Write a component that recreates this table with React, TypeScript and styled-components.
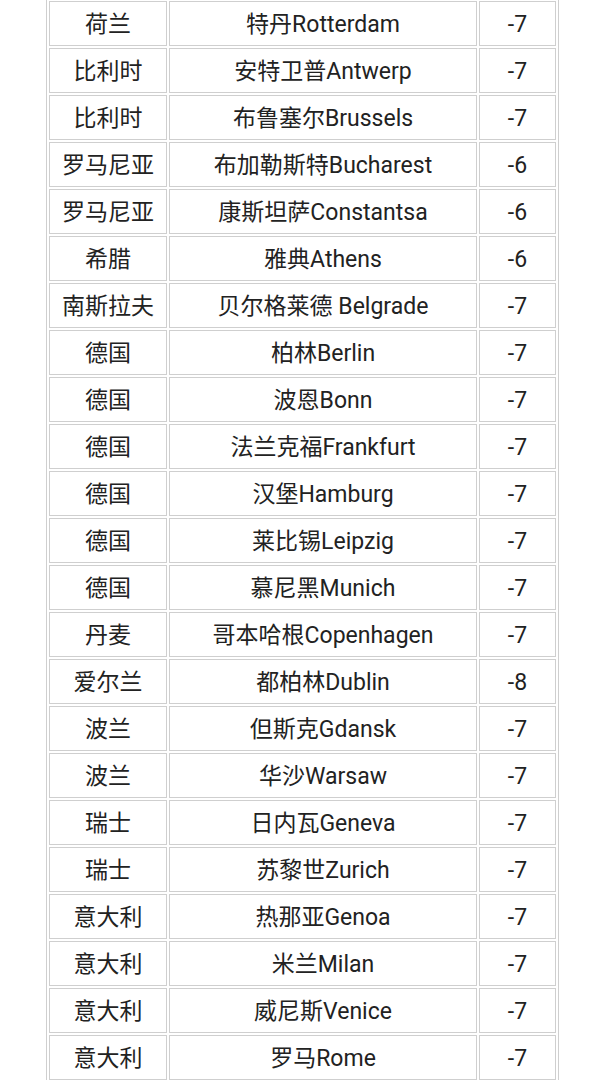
import React from "react";
import styled, { createGlobalStyle } from "styled-components";

const GlobalStyle = createGlobalStyle`
  html, body {
    margin: 0;
    padding: 0;
    background: #ffffff;
  }
  body {
    font-family: Roboto, "Noto Sans CJK SC", sans-serif;
    color: #222222;
    overflow: hidden;
  }
  *, *::before, *::after { box-sizing: border-box; }
`;

const Table = styled.div`
  display: grid;
  grid-template-columns: 118px 308px 77px;
  gap: 2px;
  padding: 2px;
  width: 513px;
  margin: -2px 0 0 46px;
  border: 1px solid #cfcfcf;
`;

const Cell = styled.div`
  height: 45px;
  padding-top: 2px;
  border: 1px solid #cfcfcf;
  display: flex;
  align-items: center;
  justify-content: center;
  font-size: 23px;
  line-height: 1;
  white-space: nowrap;
`;

const rows: [string, string, string][] = [
  ["荷兰", "特丹Rotterdam", "-7"],
  ["比利时", "安特卫普Antwerp", "-7"],
  ["比利时", "布鲁塞尔Brussels", "-7"],
  ["罗马尼亚", "布加勒斯特Bucharest", "-6"],
  ["罗马尼亚", "康斯坦萨Constantsa", "-6"],
  ["希腊", "雅典Athens", "-6"],
  ["南斯拉夫", "贝尔格莱德 Belgrade", "-7"],
  ["德国", "柏林Berlin", "-7"],
  ["德国", "波恩Bonn", "-7"],
  ["德国", "法兰克福Frankfurt", "-7"],
  ["德国", "汉堡Hamburg", "-7"],
  ["德国", "莱比锡Leipzig", "-7"],
  ["德国", "慕尼黑Munich", "-7"],
  ["丹麦", "哥本哈根Copenhagen", "-7"],
  ["爱尔兰", "都柏林Dublin", "-8"],
  ["波兰", "但斯克Gdansk", "-7"],
  ["波兰", "华沙Warsaw", "-7"],
  ["瑞士", "日内瓦Geneva", "-7"],
  ["瑞士", "苏黎世Zurich", "-7"],
  ["意大利", "热那亚Genoa", "-7"],
  ["意大利", "米兰Milan", "-7"],
  ["意大利", "威尼斯Venice", "-7"],
  ["意大利", "罗马Rome", "-7"],
];

export default function App() {
  return (
    <>
      <GlobalStyle />
      <Table>
        {rows.map(([country, city, offset], i) => (
          <React.Fragment key={i}>
            <Cell>{country}</Cell>
            <Cell>{city}</Cell>
            <Cell>{offset}</Cell>
          </React.Fragment>
        ))}
      </Table>
    </>
  );
}
